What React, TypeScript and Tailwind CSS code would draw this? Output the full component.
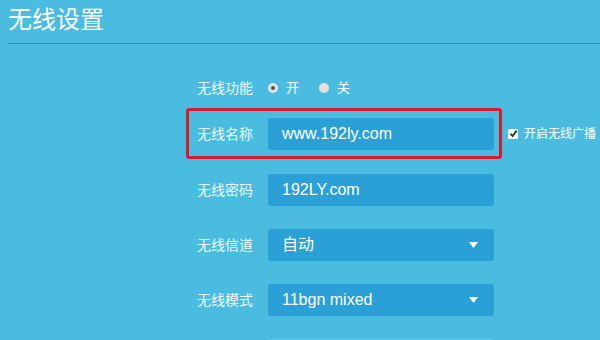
import React from "react";

const font = { fontFamily: '"Liberation Sans", "Noto Sans CJK SC", sans-serif' };

function Label({ children }: { children: React.ReactNode }) {
  return (
    <div className="w-[71px] shrink-0 text-[14px] text-[#eef8fc] leading-[32px]" style={font}>
      {children}
    </div>
  );
}

function Field({ value, select }: { value: string; select?: boolean }) {
  return (
    <div className="w-[226px] h-[32px] shrink-0 rounded-[3px] bg-[#2aa0d7] flex items-center pl-[14px] pr-[16px] text-white text-[16px]">
      <span className="flex-1">{value}</span>
      {select && (
        <svg width="9" height="6" viewBox="0 0 9 6">
          <path d="M0 0 H9 L4.5 6 Z" fill="#ffffff" />
        </svg>
      )}
    </div>
  );
}

export default function App() {
  return (
    <div
      className="w-[600px] h-[340px] overflow-hidden bg-[#4abce0] flex flex-col"
      style={{ fontFamily: '"Liberation Sans", "Noto Sans CJK SC", sans-serif' }}
    >
      <div className="h-[44px] shrink-0 ml-[8px] border-b border-[#2b93c4] pt-[6px]">
        <div className="text-[24px] leading-[28px] text-white">无线设置</div>
      </div>

      <div className="pl-[186px] flex flex-col shrink-0">
        <div className="mt-[31px] h-[26px] shrink-0 pl-[11px] flex items-center">
          <Label>无线功能</Label>
          <div className="flex items-center text-[13px] text-white">
            <span className="w-[10px] h-[10px] rounded-full bg-[#e3e3e3] flex items-center justify-center">
              <span className="w-[4px] h-[4px] rounded-full bg-[#5a4a4a]" />
            </span>
            <span className="ml-[8px]">开</span>
            <span className="ml-[20px] w-[10px] h-[10px] rounded-full bg-[#ecdcdc]" />
            <span className="ml-[8px]">关</span>
          </div>
        </div>

        <div className="mt-[7px] shrink-0 flex items-center">
          <div className="w-[316px] h-[51px] border-[3px] border-[#d21f2b] rounded-[3px] p-[8px] flex items-center">
            <Label>无线名称</Label>
            <Field value="www.192ly.com" />
          </div>
          <div className="ml-[6px] flex items-center">
            <span className="w-[10px] h-[10px] bg-white rounded-[1px] flex items-center justify-center">
              <svg width="9" height="9" viewBox="0 0 9 9">
                <path d="M1.5 4.8 L3.6 7 L7.6 1.6" stroke="#3a2a2a" strokeWidth="1.8" fill="none" />
              </svg>
            </span>
            <span className="ml-[6px] text-[12px] text-white whitespace-nowrap">开启无线广播</span>
          </div>
        </div>

        <div className="mt-[15px] shrink-0 pl-[11px] flex items-center">
          <Label>无线密码</Label>
          <Field value="192LY.com" />
        </div>
        <div className="mt-[23px] shrink-0 pl-[11px] flex items-center">
          <Label>无线信道</Label>
          <Field value="自动" select />
        </div>
        <div className="mt-[23px] shrink-0 pl-[11px] flex items-center">
          <Label>无线模式</Label>
          <Field value="11bgn mixed" select />
        </div>
        <div className="mt-[23px] shrink-0 pl-[11px] flex items-center">
          <Label>{" "}</Label>
          <div className="w-[226px] h-[32px] rounded-[3px] bg-[#2aa0d7] border-t border-[#5ccaf0]" />
        </div>
      </div>
    </div>
  );
}
